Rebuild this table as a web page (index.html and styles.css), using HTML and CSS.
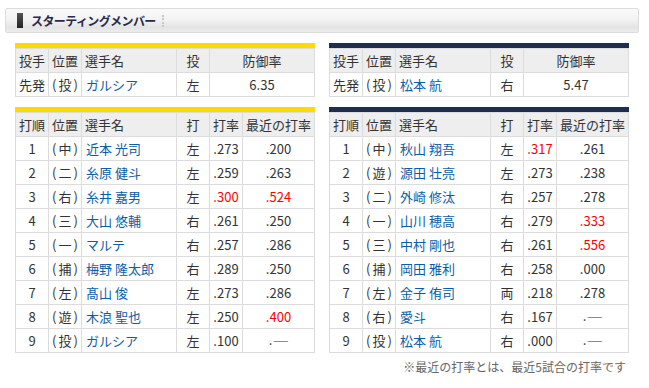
FILE: index.html
```html
<!DOCTYPE html>
<html lang="ja">
<head>
<meta charset="utf-8">
<link rel="stylesheet" href="styles.css">
</head>
<body>
<div class="titlebar"><span class="mark"></span><span class="title">スターティングメンバー</span><span class="sep"></span></div>
<div class="cols">
  <div class="team">
    <div class="bar bar-yellow"></div>
    <table class="tbl pit">
      <colgroup><col class="c33"><col class="c33"><col class="c95"><col class="c33"><col class="c105"></colgroup>
      <tr><th class="l">投手</th><th class="l">位置</th><th class="l">選手名</th><th>投</th><th>防御率</th></tr>
      <tr><td class="l">先発</td><td class="l pos">(投)</td><td class="l"><span class="name">ガルシア</span></td><td>左</td><td>6.35</td></tr>
    </table>
    <div class="bar bar-yellow bar2"></div>
    <table class="tbl bat">
      <colgroup><col class="c33"><col class="c33"><col class="c95"><col class="c33"><col class="c33"><col class="c72"></colgroup>
      <tr><th class="l">打順</th><th class="l">位置</th><th class="l">選手名</th><th>打</th><th>打率</th><th>最近の打率</th></tr>
      <tr><td>1</td><td class="l pos">(中)</td><td class="l"><span class="name">近本 光司</span></td><td>左</td><td>.273</td><td>.200</td></tr>
      <tr><td>2</td><td class="l pos">(二)</td><td class="l"><span class="name">糸原 健斗</span></td><td>左</td><td>.259</td><td>.263</td></tr>
      <tr><td>3</td><td class="l pos">(右)</td><td class="l"><span class="name">糸井 嘉男</span></td><td>左</td><td class="red">.300</td><td class="red">.524</td></tr>
      <tr><td>4</td><td class="l pos">(三)</td><td class="l"><span class="name">大山 悠輔</span></td><td>右</td><td>.261</td><td>.250</td></tr>
      <tr><td>5</td><td class="l pos">(一)</td><td class="l"><span class="name">マルテ</span></td><td>右</td><td>.257</td><td>.286</td></tr>
      <tr><td>6</td><td class="l pos">(捕)</td><td class="l"><span class="name">梅野 隆太郎</span></td><td>右</td><td>.289</td><td>.250</td></tr>
      <tr><td>7</td><td class="l pos">(左)</td><td class="l"><span class="name">髙山 俊</span></td><td>左</td><td>.273</td><td>.286</td></tr>
      <tr><td>8</td><td class="l pos">(遊)</td><td class="l"><span class="name">木浪 聖也</span></td><td>左</td><td>.250</td><td class="red">.400</td></tr>
      <tr><td>9</td><td class="l pos">(投)</td><td class="l"><span class="name">ガルシア</span></td><td>左</td><td>.100</td><td>.<span class="dash">——</span></td></tr>
    </table>
  </div>
  <div class="team">
    <div class="bar bar-navy"></div>
    <table class="tbl pit">
      <colgroup><col class="c33"><col class="c33"><col class="c95"><col class="c33"><col class="c105"></colgroup>
      <tr><th class="l">投手</th><th class="l">位置</th><th class="l">選手名</th><th>投</th><th>防御率</th></tr>
      <tr><td class="l">先発</td><td class="l pos">(投)</td><td class="l"><span class="name">松本 航</span></td><td>右</td><td>5.47</td></tr>
    </table>
    <div class="bar bar-navy bar2"></div>
    <table class="tbl bat">
      <colgroup><col class="c33"><col class="c33"><col class="c95"><col class="c33"><col class="c33"><col class="c72"></colgroup>
      <tr><th class="l">打順</th><th class="l">位置</th><th class="l">選手名</th><th>打</th><th>打率</th><th>最近の打率</th></tr>
      <tr><td>1</td><td class="l pos">(中)</td><td class="l"><span class="name">秋山 翔吾</span></td><td>左</td><td class="red">.317</td><td>.261</td></tr>
      <tr><td>2</td><td class="l pos">(遊)</td><td class="l"><span class="name">源田 壮亮</span></td><td>左</td><td>.273</td><td>.238</td></tr>
      <tr><td>3</td><td class="l pos">(二)</td><td class="l"><span class="name">外崎 修汰</span></td><td>右</td><td>.257</td><td>.278</td></tr>
      <tr><td>4</td><td class="l pos">(一)</td><td class="l"><span class="name">山川 穂高</span></td><td>右</td><td>.279</td><td class="red">.333</td></tr>
      <tr><td>5</td><td class="l pos">(三)</td><td class="l"><span class="name">中村 剛也</span></td><td>右</td><td>.261</td><td class="red">.556</td></tr>
      <tr><td>6</td><td class="l pos">(捕)</td><td class="l"><span class="name">岡田 雅利</span></td><td>右</td><td>.258</td><td>.000</td></tr>
      <tr><td>7</td><td class="l pos">(左)</td><td class="l"><span class="name">金子 侑司</span></td><td>両</td><td>.218</td><td>.278</td></tr>
      <tr><td>8</td><td class="l pos">(右)</td><td class="l"><span class="name">愛斗</span></td><td>右</td><td>.167</td><td>.<span class="dash">——</span></td></tr>
      <tr><td>9</td><td class="l pos">(投)</td><td class="l"><span class="name">松本 航</span></td><td>右</td><td>.000</td><td>.<span class="dash">——</span></td></tr>
    </table>
    <p class="note">※最近の打率とは、最近5試合の打率です</p>
  </div>
</div>
</body>
</html>
```
FILE: styles.css
```css
html, body {
  margin: 0;
  padding: 0;
  background: #fff;
}
body {
  font-family: "Noto Sans CJK JP", "Noto Sans", sans-serif;
  color: #333;
  font-size: 13px;
}
.titlebar {
  margin: 8px 0 0 5px;
  width: 634px;
  height: 25px;
  box-sizing: border-box;
  border: 1px solid #dcdcdc;
  border-radius: 2px;
  background: linear-gradient(#fafafa 0%, #f3f3f3 45%, #e4e4e4 80%, #ececec 100%);
  display: flex;
  align-items: center;
  padding-left: 11px;
}
.mark {
  width: 6px;
  height: 15px;
  background: linear-gradient(#555, #222);
}
.title {
  margin-left: 8px;
  font-size: 12px;
  font-weight: bold;
  color: #2a2a48;
  letter-spacing: -0.6px;
}
.sep {
  margin-left: 6px;
  height: 12px;
  border-left: 2px dotted #c8c8c8;
}
.cols {
  display: flex;
  gap: 14px;
  padding-left: 15px;
  margin-top: 10px;
}
.team {
  width: 300px;
}
.bar {
  height: 5px;
}
.bar-yellow { background: #ffda00; }
.bar-navy { background: #1f2d52; }
.bar2 { margin-top: 10px; }
.tbl {
  width: 300px;
  table-layout: fixed;
  border-collapse: separate;
  border-spacing: 0;
  border-top: 1px solid #dcdcdc;
  border-left: 1px solid #dcdcdc;
}
.c33 { width: 33px; }
.c95 { width: 95px; }
.c105 { width: 105px; }
.c72 { width: 72px; }
.tbl th, .tbl td {
  box-sizing: border-box;
  height: 24px;
  padding: 0;
  border-right: 1px solid #dcdcdc;
  border-bottom: 1px solid #dcdcdc;
  text-align: center;
  font-weight: normal;
  white-space: nowrap;
  line-height: 22px;
}
.tbl th {
  background: #eeeeee;
}
.tbl .l {
  text-align: left;
  padding-left: 3px;
}
.tbl .pos {
  padding-left: 3px;
  letter-spacing: 2px;
}
.name {
  color: #0a5ea8;
  padding-left: 1px;
}
.red {
  color: #ff0000;
}
.dash {
  font-size: 9px;
  margin-left: 1px;
  vertical-align: 1px;
}
.note {
  margin: 5px 0 0 0;
  text-align: right;
  font-size: 12px;
  color: #666;
  padding-right: 3px;
}
```
